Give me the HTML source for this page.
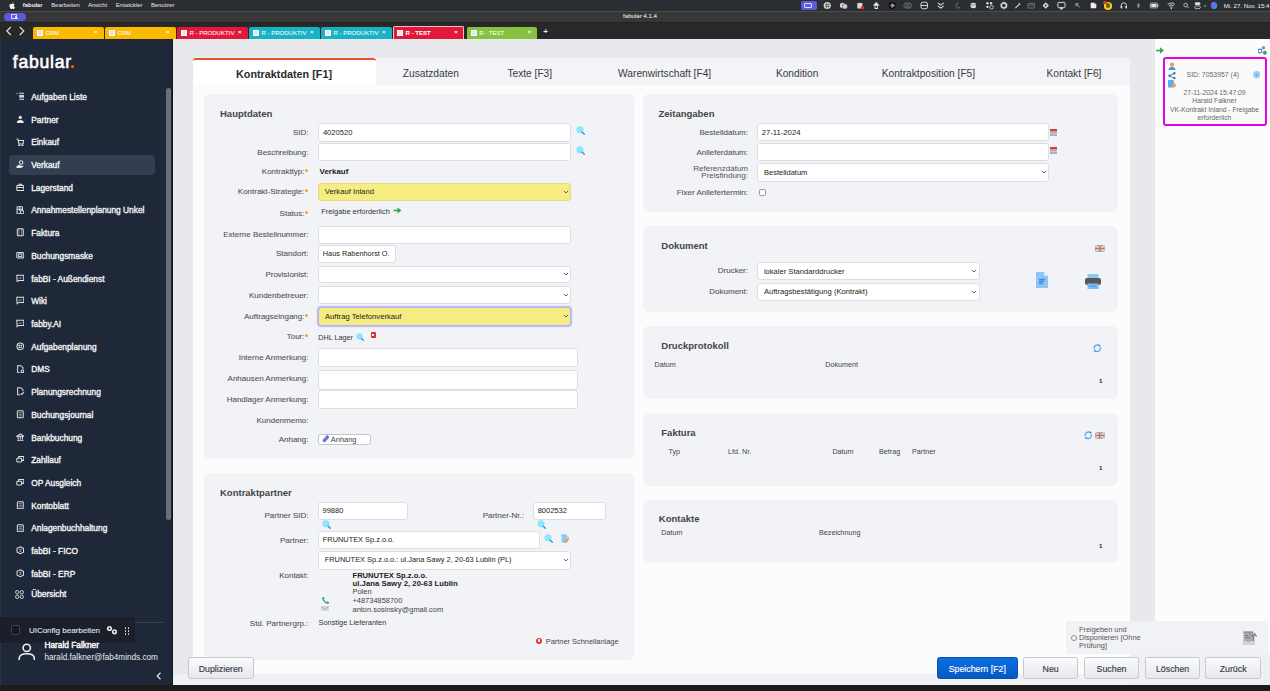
<!DOCTYPE html><html><head><meta charset='utf-8'><style>
*{margin:0;padding:0;box-sizing:border-box}
html,body{width:1270px;height:691px;overflow:hidden;background:#e8e9ed;font-family:"Liberation Sans",sans-serif}
.a{position:absolute}
.t{white-space:nowrap}
</style></head><body><div class="a" style="left:0px;top:0px;width:1270px;height:11px;background:#2a2d32"></div>
<div class="a t" style="left:22.8px;top:1.66px;font-size:5.9px;line-height:7.08px;color:#f2f2f2;font-weight:bold;">fabular</div>
<div class="a t" style="left:51.2px;top:1.66px;font-size:5.9px;line-height:7.08px;color:#e6e6e6;font-weight:normal;">Bearbeiten</div>
<div class="a t" style="left:87.9px;top:1.66px;font-size:5.9px;line-height:7.08px;color:#e6e6e6;font-weight:normal;">Ansicht</div>
<div class="a t" style="left:115.7px;top:1.66px;font-size:5.9px;line-height:7.08px;color:#e6e6e6;font-weight:normal;">Entwickler</div>
<div class="a t" style="left:150.9px;top:1.66px;font-size:5.9px;line-height:7.08px;color:#e6e6e6;font-weight:normal;">Benutzer</div>
<svg class="a" style="left:8.7px;top:2px" width="6" height="7" viewBox="0 0 14 16"><path d="M11.5 8.5c0-2 1.6-2.9 1.7-3-1-1.4-2.4-1.6-2.9-1.6-1.2-.1-2.4.7-3 .7-.6 0-1.6-.7-2.6-.7C3.300 4 1 5.200 1 8.600c0 2.100.8 4.300 1.800 5.700.8 1.200 1.600 2.200 2.600 2.200 1 0 1.400-.7 2.600-.7 1.200 0 1.500.7 2.600.7 1.100 0 1.800-1 2.500-2 .8-1.100 1.100-2.200 1.100-2.300 0 0-2.700-1-2.700-3.700zM9.500 2.600C10 2 10.400 1.100 10.300.2 9.500.2 8.600.7 8 1.300c-.5.600-1 1.500-.8 2.300.9.100 1.700-.4 2.300-1z" fill="#f0f0f0"/></svg>
<div class="a" style="left:800.7px;top:1px;width:16.6px;height:9px;background:#5b5bd6;border-radius:2px"></div>
<div class="a" style="left:804px;top:2.6px;width:8px;height:5.5px;border:1px solid #dfe0ff;border-radius:1px"></div>
<svg class="a" style="left:823px;top:1px" width="8.5" height="9" viewBox="0 0 10 10" fill="none" stroke="#e0e0e0" stroke-width="1.1"><circle cx="5" cy="5" r="4.2" fill="#e0e0e0" stroke="none"/><path d="M2 4 H8 M2 6 H8 M4 1.5 V8.5 M6 1.5 V8.5" stroke="#2a2d32" stroke-width="0.6"/></svg>
<svg class="a" style="left:839.4px;top:1px" width="9" height="9" viewBox="0 0 10 10" fill="none" stroke="#e0e0e0" stroke-width="1.1"><circle cx="4" cy="5" r="3" fill="#d8d8d8" stroke="none"/><circle cx="6.5" cy="6" r="3" fill="#cfcfcf" stroke="#2a2d32" stroke-width="0.6"/></svg>
<svg class="a" style="left:855.5px;top:1px" width="8.5" height="9" viewBox="0 0 10 10" fill="none" stroke="#e0e0e0" stroke-width="1.1"><path d="M1.5 2 H7.5 V8.5 H1.5Z" fill="#d8d8d8" stroke="none"/><circle cx="7.5" cy="7.5" r="2" fill="#e53030" stroke="none"/></svg>
<svg class="a" style="left:871.6px;top:1px" width="8.5" height="9" viewBox="0 0 10 10" fill="none" stroke="#e0e0e0" stroke-width="1.1"><path d="M5 1 L9 5 H7 V9 H3 V5 H1Z" fill="#e8e8e8" stroke="none"/><circle cx="5" cy="6.5" r="1.3" fill="#2a2d32" stroke="none"/></svg>
<svg class="a" style="left:887.6px;top:1px" width="8.5" height="9" viewBox="0 0 10 10" fill="none" stroke="#e0e0e0" stroke-width="1.1"><circle cx="5" cy="5" r="4.3" fill="#111" stroke="none"/><path d="M2.5 5 H3.3 M4 3 V7 M5.3 2.5 V7.5 M6.6 3.5 V6.5 M7.6 4.5 V5.5" stroke="#ddd" stroke-width="0.8"/></svg>
<svg class="a" style="left:902.8px;top:1px" width="9.4" height="9" viewBox="0 0 10 10" fill="none" stroke="#e0e0e0" stroke-width="1.1"><ellipse cx="5" cy="5" rx="4.3" ry="3" stroke="#777"/><circle cx="5" cy="5" r="1.4" stroke="#777"/></svg>
<svg class="a" style="left:919.8px;top:1px" width="8.5" height="9" viewBox="0 0 10 10" fill="none" stroke="#e0e0e0" stroke-width="1.1"><rect x="1.2" y="1.2" width="7.6" height="7.6" rx="2"/><path d="M1.2 5 H8.8"/></svg>
<svg class="a" style="left:936.8px;top:1px" width="7.5" height="9" viewBox="0 0 10 10" fill="none" stroke="#e0e0e0" stroke-width="1.1"><path d="M1 1.5 L5 4.5 L9 1.5 M1 5.5 L5 8.5 L9 5.5" stroke-width="1.4"/></svg>
<svg class="a" style="left:953.8px;top:1px" width="6.6" height="9" viewBox="0 0 10 10" fill="none" stroke="#e0e0e0" stroke-width="1.1"><path d="M6.5 1 A4 4 0 1 0 9 8 A3.3 3.3 0 0 1 6.5 1Z" stroke="#666"/></svg>
<svg class="a" style="left:969.9px;top:1px" width="6.6" height="9" viewBox="0 0 10 10" fill="none" stroke="#e0e0e0" stroke-width="1.1"><path d="M1 2 V8 Q5 10 9 8 V2 Q5 0 1 2Z" fill="#d8d8d8" stroke="none"/><path d="M1 3.5 Q5 5.5 9 3.5" stroke="#2a2d32" stroke-width="0.7"/></svg>
<svg class="a" style="left:985px;top:1px" width="9.4" height="9" viewBox="0 0 10 10" fill="none" stroke="#e0e0e0" stroke-width="1.1"><circle cx="2.5" cy="2.5" r="1.3" fill="#ddd" stroke="none"/><circle cx="6.5" cy="2.5" r="1.3" fill="#ddd" stroke="none"/><circle cx="2.5" cy="6.5" r="1.3" fill="#ddd" stroke="none"/><circle cx="7" cy="7" r="2" stroke-width="0.9"/></svg>
<svg class="a" style="left:1000px;top:1px" width="7.7" height="9" viewBox="0 0 10 10" fill="none" stroke="#e0e0e0" stroke-width="1.1"><circle cx="5" cy="5" r="3.2" stroke-width="1.8"/><circle cx="5" cy="5" r="4.5" stroke-width="0.8" stroke-dasharray="1.2 1.2"/></svg>
<svg class="a" style="left:1014.3px;top:1px" width="6.7" height="9" viewBox="0 0 10 10" fill="none" stroke="#e0e0e0" stroke-width="1.1"><path d="M1.5 8.5 L8 2 L9 3 L2.5 9.5Z" fill="#ddd" stroke="none"/><path d="M7 1 L9.5 3.5" stroke-width="1.4"/></svg>
<svg class="a" style="left:1026.6px;top:1px" width="8.4" height="9" viewBox="0 0 10 10" fill="none" stroke="#e0e0e0" stroke-width="1.1"><rect x="1" y="2.5" width="8" height="5.5" rx="1" stroke="#777"/><path d="M1 4.5 H9" stroke="#777"/></svg>
<svg class="a" style="left:1042.3px;top:1px" width="7.5" height="9" viewBox="0 0 10 10" fill="none" stroke="#e0e0e0" stroke-width="1.1"><path d="M5 0.8 L9.2 5 L5 9.2 L0.8 5Z" fill="#ddd" stroke="none"/><circle cx="5" cy="5" r="1.2" fill="#2a2d32" stroke="none"/></svg>
<svg class="a" style="left:1057.4px;top:1px" width="8.9" height="9" viewBox="0 0 10 10" fill="none" stroke="#e0e0e0" stroke-width="1.1"><rect x="1" y="1.5" width="8" height="6" rx="1"/><path d="M4 9 L5 7 L6 9Z" fill="#ddd"/></svg>
<svg class="a" style="left:1075.4px;top:1px" width="5.6" height="9" viewBox="0 0 10 10" fill="none" stroke="#e0e0e0" stroke-width="1.1"><path d="M8.5 8.5 L2 2 M2 6.5 V2 H6.5" stroke-width="1.3"/></svg>
<svg class="a" style="left:1090px;top:1px" width="7" height="9" viewBox="0 0 10 10" fill="none" stroke="#e0e0e0" stroke-width="1.1"><path d="M1 1 H6.5 L9 3.5 V9 H1Z" fill="#eee" stroke="none"/><path d="M6.5 1 V3.5 H9" stroke="#999" stroke-width="0.6"/></svg>
<div class="a" style="left:1103.7px;top:1.5px;width:8.5px;height:8px;background:#f2d21b;border-radius:50%"></div>
<div class="a" style="left:1105.6px;top:3.4px;width:4.6px;height:4.2px;background:#6b5a10;border-radius:50%"></div>
<div class="a" style="left:1103px;top:0.8px;width:3.6px;height:3.6px;background:#e5332a;border-radius:50%"></div>
<svg class="a" style="left:1119.8px;top:1px" width="7.6" height="9" viewBox="0 0 10 10" fill="none" stroke="#e0e0e0" stroke-width="1.1"><path d="M1.5 8 V5 A3.5 3.5 0 0 1 8.5 5 V8" stroke-width="1.2"/><rect x="1" y="5.5" width="2" height="3.5" rx="0.6" fill="#e0e0e0" stroke="none"/><rect x="7" y="5.5" width="2" height="3.5" rx="0.6" fill="#e0e0e0" stroke="none"/></svg>
<svg class="a" style="left:1135.9px;top:1px" width="4.7" height="9" viewBox="0 0 10 10" fill="none" stroke="#e0e0e0" stroke-width="1.1"><path d="M2.5 3 L7.5 7 L5 9 V1 L7.5 3 L2.5 7" stroke-width="1.1"/></svg>
<svg class="a" style="left:1149px;top:1px" width="10.5" height="9" viewBox="0 0 10 10" fill="none" stroke="#e0e0e0" stroke-width="1.1"><rect x="0.6" y="2.3" width="8" height="5.4" rx="1.2" stroke-width="0.8"/><rect x="1.6" y="3.3" width="6" height="3.4" fill="#e0e0e0" stroke="none"/><path d="M9.3 4 V6" stroke-width="0.8"/></svg>
<svg class="a" style="left:1167px;top:1px" width="8.6" height="9" viewBox="0 0 10 10" fill="none" stroke="#e0e0e0" stroke-width="1.1"><path d="M0.8 3.8 A6 6 0 0 1 9.2 3.8 M2.3 5.5 A4 4 0 0 1 7.7 5.5 M3.8 7.1 A2 2 0 0 1 6.2 7.1" stroke-width="1.1"/><circle cx="5" cy="8.5" r="0.8" fill="#e0e0e0" stroke="none"/></svg>
<svg class="a" style="left:1182.7px;top:1px" width="6.1" height="9" viewBox="0 0 10 10" fill="none" stroke="#e0e0e0" stroke-width="1.1"><circle cx="4.3" cy="4.3" r="3" stroke-width="1.2"/><path d="M6.5 6.5 L9.2 9.2" stroke-width="1.3"/></svg>
<svg class="a" style="left:1194px;top:1px" width="8" height="9" viewBox="0 0 10 10" fill="none" stroke="#e0e0e0" stroke-width="1.1"><rect x="1" y="1" width="7" height="3.5" rx="1.75" fill="#e0e0e0" stroke="none"/><rect x="1" y="5.5" width="7" height="3.5" rx="1.75" stroke-width="0.9"/></svg>
<div class="a" style="left:1210.5px;top:1.5px;width:6.5px;height:7px;background:linear-gradient(135deg,#d94fd0,#3a7bf0,#2bc6c4);border-radius:50%"></div>
<div class="a" style="left:1203.5px;top:4.5px;width:2px;height:2px;background:#2ecc40;border-radius:50%"></div>
<div class="a t" style="left:1223.8px;top:1.54px;font-size:6.1px;line-height:7.32px;color:#f0f0f0;font-weight:normal;">Mi. 27. Nov. 15:4</div>
<div class="a" style="left:0px;top:10.5px;width:1270px;height:11.5px;background:#373737;border-top:1px solid #4d4d4d"></div>
<div class="a" style="left:3.5px;top:12.5px;width:22px;height:8.5px;background:#5a5ae0;border-radius:5px"></div>
<div class="a" style="left:10.8px;top:14px;width:6px;height:5px;border:0.9px solid #d8d8ff;border-radius:0.5px"></div>
<div class="a" style="left:14.5px;top:17.6px;width:3.6px;height:1.9px;background:#f0f0ff;border-radius:1.5px 1.5px 0 0"></div>
<div class="a" style="left:15.4px;top:15.8px;width:1.8px;height:1.8px;background:#f0f0ff;border-radius:50%"></div>
<div class="a t" style="left:340px;width:600px;text-align:center;top:12.34px;font-size:6.1px;line-height:7.32px;color:#d8d8d8;font-weight:normal;-webkit-text-stroke:0.15px #d8d8d8">fabular 4.1.4</div>
<div class="a" style="left:0px;top:22px;width:1270px;height:16.6px;background:#282828;border-top:0.6px solid #222"></div>
<svg class="a" style="left:5px;top:26px" width="22" height="10" viewBox="0 0 22 10"><path d="M5.8 1 L1.8 5 L5.8 9" stroke="#e8e8e8" stroke-width="1.1" fill="none"/><path d="M18.6 1 L22.6 5 L18.6 9" stroke="#e8e8e8" stroke-width="1.1" fill="none" transform="translate(-3.8,0)"/></svg>
<div class="a" style="left:33px;top:27px;width:70.6px;height:12px;background:#fbb900;border-radius:2px 2px 0 0"></div>
<div class="a" style="left:37px;top:29.8px;width:6px;height:6.3px;background:#e3e7f0;border:0.6px solid #fafafa"></div>
<div class="a t" style="left:45.4px;top:29.57px;font-size:6.05px;line-height:7.26px;color:#fff;font-weight:normal;-webkit-text-stroke:0.05px #fff">CRM</div>
<div class="a t" style="left:94px;top:29.40px;font-size:6px;line-height:7.20px;color:#fff;font-weight:bold;">×</div>
<div class="a" style="left:105px;top:27px;width:70.6px;height:12px;background:#fbb900;border-radius:2px 2px 0 0"></div>
<div class="a" style="left:109px;top:29.8px;width:6px;height:6.3px;background:#e3e7f0;border:0.6px solid #fafafa"></div>
<div class="a t" style="left:117.4px;top:29.57px;font-size:6.05px;line-height:7.26px;color:#fff;font-weight:normal;-webkit-text-stroke:0.05px #fff">CRM</div>
<div class="a t" style="left:166px;top:29.40px;font-size:6px;line-height:7.20px;color:#fff;font-weight:bold;">×</div>
<div class="a" style="left:177px;top:27px;width:70.6px;height:12px;background:#e2173a;border-radius:2px 2px 0 0"></div>
<div class="a" style="left:181px;top:29.8px;width:6px;height:6.3px;background:#e3e7f0;border:0.6px solid #fafafa"></div>
<div class="a t" style="left:189.4px;top:29.57px;font-size:6.05px;line-height:7.26px;color:#fff;font-weight:normal;-webkit-text-stroke:0.05px #fff">R - PRODUKTIV</div>
<div class="a t" style="left:238px;top:29.40px;font-size:6px;line-height:7.20px;color:#fff;font-weight:bold;">×</div>
<div class="a" style="left:249px;top:27px;width:70.6px;height:12px;background:#17b2c4;border-radius:2px 2px 0 0"></div>
<div class="a" style="left:253px;top:29.8px;width:6px;height:6.3px;background:#e3e7f0;border:0.6px solid #fafafa"></div>
<div class="a t" style="left:261.4px;top:29.57px;font-size:6.05px;line-height:7.26px;color:#fff;font-weight:normal;-webkit-text-stroke:0.05px #fff">R - PRODUKTIV</div>
<div class="a t" style="left:310px;top:29.40px;font-size:6px;line-height:7.20px;color:#fff;font-weight:bold;">×</div>
<div class="a" style="left:321px;top:27px;width:70.6px;height:12px;background:#17b2c4;border-radius:2px 2px 0 0"></div>
<div class="a" style="left:325px;top:29.8px;width:6px;height:6.3px;background:#e3e7f0;border:0.6px solid #fafafa"></div>
<div class="a t" style="left:333.4px;top:29.57px;font-size:6.05px;line-height:7.26px;color:#fff;font-weight:normal;-webkit-text-stroke:0.05px #fff">R - PRODUKTIV</div>
<div class="a t" style="left:382px;top:29.40px;font-size:6px;line-height:7.20px;color:#fff;font-weight:bold;">×</div>
<div class="a" style="left:393.2px;top:25.5px;width:70.6px;height:13.5px;background:#e2173a;border:1px solid #f3c0c8;border-bottom:none;border-radius:2px 2px 0 0"></div>
<div class="a" style="left:397.2px;top:29.8px;width:6px;height:6.3px;background:#e3e7f0;border:0.6px solid #fafafa"></div>
<div class="a t" style="left:405.59999999999997px;top:29.57px;font-size:6.05px;line-height:7.26px;color:#fff;font-weight:bold;-webkit-text-stroke:0.05px #fff">R - TEST</div>
<div class="a t" style="left:454.2px;top:29.40px;font-size:6px;line-height:7.20px;color:#fff;font-weight:bold;">×</div>
<div class="a" style="left:466.8px;top:27px;width:70.6px;height:12px;background:#86c240;border-radius:2px 2px 0 0"></div>
<div class="a" style="left:470.8px;top:29.8px;width:6px;height:6.3px;background:#e3e7f0;border:0.6px solid #fafafa"></div>
<div class="a t" style="left:479.2px;top:29.57px;font-size:6.05px;line-height:7.26px;color:#fff;font-weight:normal;-webkit-text-stroke:0.05px #fff">R - TEST</div>
<div class="a t" style="left:527.8px;top:29.40px;font-size:6px;line-height:7.20px;color:#fff;font-weight:bold;">×</div>
<div class="a t" style="left:543.3px;top:27.00px;font-size:8px;line-height:9.60px;color:#eee;font-weight:bold;">+</div>
<div class="a" style="left:0px;top:38.6px;width:172.5px;height:647px;background:#1f2838;border-right:1px solid #0f141c"></div>
<div class="a" style="left:0px;top:38.6px;width:1.2px;height:647px;background:#2c3442"></div>
<div class="a t" style="left:12.8px;top:52.24px;font-size:17.6px;line-height:21.12px;color:#ffffff;font-weight:normal;letter-spacing:0.75px;-webkit-text-stroke:0.6px #fff">fabular</div>
<div class="a" style="left:71.3px;top:65.3px;width:3px;height:3px;background:#f26b1d;border-radius:50%"></div>
<div class="a" style="left:8.9px;top:155.3px;width:146.5px;height:19.4px;background:#333e51;border-radius:4px"></div>
<div class="a t" style="left:31.2px;top:91.89px;font-size:8.35px;line-height:10.02px;color:#f2f4f7;font-weight:normal;-webkit-text-stroke:0.35px #f2f4f7">Aufgaben Liste</div>
<svg class="a" style="left:15.8px;top:92.10px" width="8.6" height="8.6" viewBox="0 0 16 16" fill="none" stroke="#dde1e7" stroke-width="1.9"><path d="M1 3 L2 4 L4 1.5" stroke-width="1.2"/><path d="M6 2.5 H15 M6 13.5 H15"/><rect x="6" y="5.5" width="9" height="5" fill="#cfd3da" stroke="none"/></svg>
<div class="a t" style="left:31.2px;top:114.60px;font-size:8.35px;line-height:10.02px;color:#f2f4f7;font-weight:normal;-webkit-text-stroke:0.35px #f2f4f7">Partner</div>
<svg class="a" style="left:15.8px;top:114.81px" width="8.6" height="8.6" viewBox="0 0 16 16" fill="none" stroke="#dde1e7" stroke-width="1.9"><circle cx="8" cy="4.5" r="3" fill="#e8ebef" stroke="none"/><path d="M1.5 15 Q1.5 9.5 8 9.5 Q14.5 9.5 14.5 15Z" fill="#e8ebef" stroke="none"/></svg>
<div class="a t" style="left:31.2px;top:137.31px;font-size:8.35px;line-height:10.02px;color:#f2f4f7;font-weight:normal;-webkit-text-stroke:0.35px #f2f4f7">Einkauf</div>
<svg class="a" style="left:15.8px;top:137.52px" width="8.6" height="8.6" viewBox="0 0 16 16" fill="none" stroke="#dde1e7" stroke-width="1.9"><path d="M1 2 H3.5 L5.5 11 H13 L14.5 4.5 H4.5"/><circle cx="6" cy="14" r="1.1"/><circle cx="12" cy="14" r="1.1"/></svg>
<div class="a t" style="left:31.2px;top:160.02px;font-size:8.35px;line-height:10.02px;color:#f2f4f7;font-weight:normal;-webkit-text-stroke:0.35px #f2f4f7">Verkauf</div>
<svg class="a" style="left:15.8px;top:160.23px" width="8.6" height="8.6" viewBox="0 0 16 16" fill="none" stroke="#dde1e7" stroke-width="1.9"><circle cx="9.5" cy="4.5" r="3.2"/><path d="M1 11 L5 9.5 Q7 9 9 10.5 H13 Q15 11 13.5 12.5 L9 15 H1Z" fill="#e8ebef" stroke="none"/></svg>
<div class="a t" style="left:31.2px;top:182.73px;font-size:8.35px;line-height:10.02px;color:#f2f4f7;font-weight:normal;-webkit-text-stroke:0.35px #f2f4f7">Lagerstand</div>
<svg class="a" style="left:15.8px;top:182.94px" width="8.6" height="8.6" viewBox="0 0 16 16" fill="none" stroke="#dde1e7" stroke-width="1.9"><rect x="1.5" y="4.5" width="13" height="9.5" rx="1.5"/><path d="M5.5 4.5 V2.5 H10.5 V4.5 M1.5 8.5 H14.5"/></svg>
<div class="a t" style="left:31.2px;top:205.44px;font-size:8.35px;line-height:10.02px;color:#f2f4f7;font-weight:normal;-webkit-text-stroke:0.35px #f2f4f7">Annahmestellenplanung Unkel</div>
<svg class="a" style="left:15.8px;top:205.65px" width="8.6" height="8.6" viewBox="0 0 16 16" fill="none" stroke="#dde1e7" stroke-width="1.9"><rect x="2" y="1.5" width="10" height="13" rx="1"/><path d="M2 6 H12 M7 1.5 V10"/><circle cx="11.5" cy="11.5" r="3.2" fill="#1f2838"/></svg>
<div class="a t" style="left:31.2px;top:228.15px;font-size:8.35px;line-height:10.02px;color:#f2f4f7;font-weight:normal;-webkit-text-stroke:0.35px #f2f4f7">Faktura</div>
<svg class="a" style="left:15.8px;top:228.36px" width="8.6" height="8.6" viewBox="0 0 16 16" fill="none" stroke="#dde1e7" stroke-width="1.9"><rect x="2.5" y="1.5" width="11" height="13" rx="1.5"/><path d="M5.5 1.5 V14.5 M10.5 1.5 V14.5" stroke-width="1"/></svg>
<div class="a t" style="left:31.2px;top:250.86px;font-size:8.35px;line-height:10.02px;color:#f2f4f7;font-weight:normal;-webkit-text-stroke:0.35px #f2f4f7">Buchungsmaske</div>
<svg class="a" style="left:15.8px;top:251.07px" width="8.6" height="8.6" viewBox="0 0 16 16" fill="none" stroke="#dde1e7" stroke-width="1.9"><rect x="1.5" y="3" width="13" height="10" rx="1.5"/><rect x="5" y="5.5" width="6" height="5"/></svg>
<div class="a t" style="left:31.2px;top:273.57px;font-size:8.35px;line-height:10.02px;color:#f2f4f7;font-weight:normal;-webkit-text-stroke:0.35px #f2f4f7">fabBI - Außendienst</div>
<svg class="a" style="left:15.8px;top:273.78px" width="8.6" height="8.6" viewBox="0 0 16 16" fill="none" stroke="#dde1e7" stroke-width="1.9"><path d="M1.5 2.5 H14.5 V12 H5 L2 14.5 Z"/><path d="M4.5 9.5 L7 7 L9 8.5 L11.5 6" stroke-width="1.2"/></svg>
<div class="a t" style="left:31.2px;top:296.28px;font-size:8.35px;line-height:10.02px;color:#f2f4f7;font-weight:normal;-webkit-text-stroke:0.35px #f2f4f7">Wiki</div>
<svg class="a" style="left:15.8px;top:296.49px" width="8.6" height="8.6" viewBox="0 0 16 16" fill="none" stroke="#dde1e7" stroke-width="1.9"><path d="M1.5 2.5 H14.5 V12 H5 L2 14.5 Z"/><path d="M4.5 9.5 L7 7 L9 8.5 L11.5 6" stroke-width="1.2"/></svg>
<div class="a t" style="left:31.2px;top:318.99px;font-size:8.35px;line-height:10.02px;color:#f2f4f7;font-weight:normal;-webkit-text-stroke:0.35px #f2f4f7">fabby.AI</div>
<svg class="a" style="left:15.8px;top:319.20px" width="8.6" height="8.6" viewBox="0 0 16 16" fill="none" stroke="#dde1e7" stroke-width="1.9"><path d="M1.5 2.5 H14.5 V12 H5 L2 14.5 Z"/><path d="M4.5 9.5 L7 7 L9 8.5 L11.5 6" stroke-width="1.2"/></svg>
<div class="a t" style="left:31.2px;top:341.70px;font-size:8.35px;line-height:10.02px;color:#f2f4f7;font-weight:normal;-webkit-text-stroke:0.35px #f2f4f7">Aufgabenplanung</div>
<svg class="a" style="left:15.8px;top:341.91px" width="8.6" height="8.6" viewBox="0 0 16 16" fill="none" stroke="#dde1e7" stroke-width="1.9"><circle cx="8" cy="8" r="6.3"/><circle cx="5.8" cy="6.5" r="0.8" fill="#cfd3da"/><circle cx="10.2" cy="6.5" r="0.8" fill="#cfd3da"/><path d="M5 11 Q8 8.5 11 11"/></svg>
<div class="a t" style="left:31.2px;top:364.41px;font-size:8.35px;line-height:10.02px;color:#f2f4f7;font-weight:normal;-webkit-text-stroke:0.35px #f2f4f7">DMS</div>
<svg class="a" style="left:15.8px;top:364.62px" width="8.6" height="8.6" viewBox="0 0 16 16" fill="none" stroke="#dde1e7" stroke-width="1.9"><path d="M9.5 1.5 H3 V14.5 H8 M9.5 1.5 L13 5 V8"/><circle cx="12" cy="12" r="2.5"/></svg>
<div class="a t" style="left:31.2px;top:387.12px;font-size:8.35px;line-height:10.02px;color:#f2f4f7;font-weight:normal;-webkit-text-stroke:0.35px #f2f4f7">Planungsrechnung</div>
<svg class="a" style="left:15.8px;top:387.33px" width="8.6" height="8.6" viewBox="0 0 16 16" fill="none" stroke="#dde1e7" stroke-width="1.9"><path d="M9.5 1.5 H3 V14.5 H8 M9.5 1.5 L13 5 V8"/><path d="M9 12 L11 14 L14.5 9.5"/></svg>
<div class="a t" style="left:31.2px;top:409.83px;font-size:8.35px;line-height:10.02px;color:#f2f4f7;font-weight:normal;-webkit-text-stroke:0.35px #f2f4f7">Buchungsjournal</div>
<svg class="a" style="left:15.8px;top:410.04px" width="8.6" height="8.6" viewBox="0 0 16 16" fill="none" stroke="#dde1e7" stroke-width="1.9"><rect x="2.5" y="1.5" width="11" height="13" rx="1.5"/><path d="M5 5 H11 M5 8 H11 M5 11 H11" stroke-width="1.1"/></svg>
<div class="a t" style="left:31.2px;top:432.54px;font-size:8.35px;line-height:10.02px;color:#f2f4f7;font-weight:normal;-webkit-text-stroke:0.35px #f2f4f7">Bankbuchung</div>
<svg class="a" style="left:15.8px;top:432.75px" width="8.6" height="8.6" viewBox="0 0 16 16" fill="none" stroke="#dde1e7" stroke-width="1.9"><path d="M1.5 6 L8 1.5 L14.5 6 Z M2 14.5 H14 M4 7 V12.5 M8 7 V12.5 M12 7 V12.5"/></svg>
<div class="a t" style="left:31.2px;top:455.25px;font-size:8.35px;line-height:10.02px;color:#f2f4f7;font-weight:normal;-webkit-text-stroke:0.35px #f2f4f7">Zahllauf</div>
<svg class="a" style="left:15.8px;top:455.46px" width="8.6" height="8.6" viewBox="0 0 16 16" fill="none" stroke="#dde1e7" stroke-width="1.9"><rect x="1.5" y="6" width="9" height="7" rx="1.5"/><path d="M5 6 V3 H14.5 V10 H10.5"/></svg>
<div class="a t" style="left:31.2px;top:477.96px;font-size:8.35px;line-height:10.02px;color:#f2f4f7;font-weight:normal;-webkit-text-stroke:0.35px #f2f4f7">OP Ausgleich</div>
<svg class="a" style="left:15.8px;top:478.17px" width="8.6" height="8.6" viewBox="0 0 16 16" fill="none" stroke="#dde1e7" stroke-width="1.9"><rect x="1.5" y="6" width="9" height="7" rx="1.5"/><path d="M5 6 V3 H14.5 V10 H10.5"/></svg>
<div class="a t" style="left:31.2px;top:500.67px;font-size:8.35px;line-height:10.02px;color:#f2f4f7;font-weight:normal;-webkit-text-stroke:0.35px #f2f4f7">Kontoblatt</div>
<svg class="a" style="left:15.8px;top:500.88px" width="8.6" height="8.6" viewBox="0 0 16 16" fill="none" stroke="#dde1e7" stroke-width="1.9"><rect x="2.5" y="1.5" width="11" height="13" rx="1.5"/><path d="M5 5 H11 M5 8 H11 M5 11 H11" stroke-width="1.1"/></svg>
<div class="a t" style="left:31.2px;top:523.38px;font-size:8.35px;line-height:10.02px;color:#f2f4f7;font-weight:normal;-webkit-text-stroke:0.35px #f2f4f7">Anlagenbuchhaltung</div>
<svg class="a" style="left:15.8px;top:523.59px" width="8.6" height="8.6" viewBox="0 0 16 16" fill="none" stroke="#dde1e7" stroke-width="1.9"><rect x="2.5" y="1.5" width="11" height="13" rx="1.5"/><path d="M5 5 H11 M5 8 H11 M5 11 H11" stroke-width="1.1"/></svg>
<div class="a t" style="left:31.2px;top:546.09px;font-size:8.35px;line-height:10.02px;color:#f2f4f7;font-weight:normal;-webkit-text-stroke:0.35px #f2f4f7">fabBI - FICO</div>
<svg class="a" style="left:15.8px;top:546.30px" width="8.6" height="8.6" viewBox="0 0 16 16" fill="none" stroke="#dde1e7" stroke-width="1.9"><path d="M8 1.5 L14 4.5 V11.5 L8 14.5 L2 11.5 V4.5 Z"/><path d="M6 6 H10 L7 10 H10" stroke-width="1.2"/></svg>
<div class="a t" style="left:31.2px;top:568.80px;font-size:8.35px;line-height:10.02px;color:#f2f4f7;font-weight:normal;-webkit-text-stroke:0.35px #f2f4f7">fabBI - ERP</div>
<svg class="a" style="left:15.8px;top:569.01px" width="8.6" height="8.6" viewBox="0 0 16 16" fill="none" stroke="#dde1e7" stroke-width="1.9"><path d="M8 1.5 L14 4.5 V11.5 L8 14.5 L2 11.5 V4.5 Z"/><path d="M6 6 H10 L7 10 H10" stroke-width="1.2"/></svg>
<div class="a t" style="left:31.2px;top:589.39px;font-size:8.35px;line-height:10.02px;color:#f2f4f7;font-weight:normal;-webkit-text-stroke:0.35px #f2f4f7">Übersicht</div>
<svg class="a" style="left:15.4px;top:590px" width="9" height="9" viewBox="0 0 9 9" fill="none" stroke="#c9ced6" stroke-width="1"><circle cx="2.2" cy="2.2" r="1.7"/><circle cx="6.8" cy="2.2" r="1.7"/><circle cx="2.2" cy="6.8" r="1.7"/><circle cx="6.8" cy="6.8" r="1.7"/></svg>
<div class="a" style="left:166px;top:88px;width:5.2px;height:432px;background:#6b7078;border-radius:3px"></div>
<div class="a" style="left:9px;top:622px;width:155px;height:0.8px;background:#3a4354"></div>
<div class="a" style="left:0px;top:617px;width:135px;height:25.7px;background:#1a1f28;border-radius:0 3px 3px 0;opacity:.95"></div>
<div class="a" style="left:10.9px;top:625.3px;width:9.2px;height:9.3px;border:1px solid #3d4450;border-radius:1.5px;background:#151a22"></div>
<div class="a t" style="left:28.9px;top:625.70px;font-size:8.0px;line-height:9.60px;color:#dfe3ea;font-weight:normal;-webkit-text-stroke:0.12px #dfe3ea">UIConfig bearbeiten</div>
<svg class="a" style="left:105.5px;top:625px" width="12" height="10" viewBox="0 0 12 10"><circle cx="3.5" cy="3.5" r="2.6" fill="#e6e6e6"/><circle cx="3.5" cy="3.5" r="1" fill="#1a1f28"/><circle cx="8.5" cy="6.8" r="2.6" fill="#e6e6e6"/><circle cx="8.5" cy="6.8" r="1" fill="#1a1f28"/></svg>
<div class="a" style="left:124.6px;top:627px;width:1.6px;height:1.6px;background:#e6e6e6;border-radius:50%"></div>
<div class="a" style="left:124.6px;top:630px;width:1.6px;height:1.6px;background:#e6e6e6;border-radius:50%"></div>
<div class="a" style="left:124.6px;top:633px;width:1.6px;height:1.6px;background:#e6e6e6;border-radius:50%"></div>
<div class="a" style="left:127.6px;top:627px;width:1.6px;height:1.6px;background:#e6e6e6;border-radius:50%"></div>
<div class="a" style="left:127.6px;top:630px;width:1.6px;height:1.6px;background:#e6e6e6;border-radius:50%"></div>
<div class="a" style="left:127.6px;top:633px;width:1.6px;height:1.6px;background:#e6e6e6;border-radius:50%"></div>
<svg class="a" style="left:17.8px;top:643.2px" width="17.5" height="17.5" viewBox="0 0 18 18" fill="none" stroke="#f0f0f0" stroke-width="1.6"><circle cx="9" cy="5" r="3.8"/><path d="M1.2 17.5 v-1.5 c0-3 3-5 7.8-5 s7.8 2 7.8 5 v1.5"/></svg>
<div class="a t" style="left:44.5px;top:641.22px;font-size:8.3px;line-height:9.96px;color:#ffffff;font-weight:normal;-webkit-text-stroke:0.4px #fff">Harald Falkner</div>
<div class="a t" style="left:44.5px;top:652.58px;font-size:8.2px;line-height:9.84px;color:#e8eaee;font-weight:normal;">harald.falkner@fab4minds.com</div>
<svg class="a" style="left:156px;top:671.5px" width="6" height="8" viewBox="0 0 6 8"><path d="M4.5 0.8 L1.2 4 L4.5 7.2" stroke="#e8e8e8" stroke-width="1.2" fill="none"/></svg>
<div class="a" style="left:0px;top:685px;width:1270px;height:6px;background:#1c1c1c"></div>
<div class="a" style="left:193px;top:58.3px;width:936.6px;height:615.5px;background:#fcfcfd"></div>
<div class="a" style="left:376px;top:58.3px;width:753.6px;height:27.7px;background:#f3f4f7"></div>
<div class="a" style="left:193px;top:58.3px;width:183px;height:27.7px;background:#ffffff;border-top:2.2px solid #e0582a;border-radius:3px 3px 0 0"></div>
<div class="a t" style="left:236px;top:67.52px;font-size:10.8px;line-height:12.96px;color:#2b2b2b;font-weight:bold;">Kontraktdaten [F1]</div>
<div class="a t" style="left:402.8px;top:68.28px;font-size:10.2px;line-height:12.24px;color:#3a3a3a;font-weight:normal;">Zusatzdaten</div>
<div class="a t" style="left:507.4px;top:68.28px;font-size:10.2px;line-height:12.24px;color:#3a3a3a;font-weight:normal;">Texte [F3]</div>
<div class="a t" style="left:618.1px;top:68.28px;font-size:10.2px;line-height:12.24px;color:#3a3a3a;font-weight:normal;">Warenwirtschaft [F4]</div>
<div class="a t" style="left:775.9px;top:68.28px;font-size:10.2px;line-height:12.24px;color:#3a3a3a;font-weight:normal;">Kondition</div>
<div class="a t" style="left:881.7px;top:68.28px;font-size:10.2px;line-height:12.24px;color:#3a3a3a;font-weight:normal;">Kontraktposition [F5]</div>
<div class="a t" style="left:1046.5px;top:68.28px;font-size:10.2px;line-height:12.24px;color:#3a3a3a;font-weight:normal;">Kontakt [F6]</div>
<div class="a" style="left:1155px;top:38.6px;width:115px;height:646.4px;background:#fcfcfc"></div>
<div class="a" style="left:204.3px;top:94.3px;width:429.49999999999994px;height:364.7px;background:#f2f3f7;border-radius:6px"></div>
<div class="a t" style="left:220px;top:108.30px;font-size:9.5px;line-height:11.40px;color:#444;font-weight:bold;">Hauptdaten</div>
<div class="a t" style="right:961.5px;top:127.50px;font-size:8px;line-height:9.60px;color:#555;font-weight:normal;-webkit-text-stroke:0.1px #555">SID:</div>
<div class="a" style="left:318.2px;top:123.3px;width:252.90000000000003px;height:18.500000000000004px;background:#fff;border:1px solid #dcdee3;border-radius:3px;"></div>
<div class="a t" style="left:322.9px;top:128.19px;font-size:7.6px;line-height:9.12px;color:#222;font-weight:normal;">4020520</div>
<svg class="a" style="left:576px;top:126px" width="9" height="9" viewBox="0 0 10 10"><circle cx="4.4" cy="4.3" r="3.9" fill="#8ae6fc"/><path d="M6.9 6.9 L9.2 9.1" stroke="#2a90e0" stroke-width="1.5" stroke-linecap="round"/></svg>
<div class="a t" style="right:961.5px;top:147.70px;font-size:8px;line-height:9.60px;color:#555;font-weight:normal;-webkit-text-stroke:0.1px #555">Beschreibung:</div>
<div class="a" style="left:318.2px;top:143.3px;width:252.90000000000003px;height:17.99999999999999px;background:#fff;border:1px solid #dcdee3;border-radius:3px;"></div>
<svg class="a" style="left:576px;top:145.5px" width="9" height="9" viewBox="0 0 10 10"><circle cx="4.4" cy="4.3" r="3.9" fill="#8ae6fc"/><path d="M6.9 6.9 L9.2 9.1" stroke="#2a90e0" stroke-width="1.5" stroke-linecap="round"/></svg>
<div class="a t" style="right:965.5px;top:166.50px;font-size:8px;line-height:9.60px;color:#555;font-weight:normal;-webkit-text-stroke:0.1px #555">Kontrakttyp:</div>
<div class="a" style="left:305.3px;top:168.70000000000002px;width:3px;height:3px;background:#f7a035;border-radius:50%"></div>
<div class="a t" style="left:319.5px;top:166.50px;font-size:8px;line-height:9.60px;color:#222;font-weight:bold;">Verkauf</div>
<div class="a t" style="right:965.5px;top:186.70px;font-size:8px;line-height:9.60px;color:#555;font-weight:normal;-webkit-text-stroke:0.1px #555">Kontrakt-Strategie:</div>
<div class="a" style="left:305.3px;top:188.9px;width:3px;height:3px;background:#f7a035;border-radius:50%"></div>
<div class="a" style="left:318.2px;top:182.8px;width:252.90000000000003px;height:18.099999999999984px;background:#f5ec82;border:1px solid #e6dc79;border-radius:3px;"></div>
<div class="a t" style="left:324.8px;top:187.43px;font-size:7.7px;line-height:9.24px;color:#222;font-weight:normal;">Verkauf Inland</div>
<svg class="a" style="left:563.0px;top:189.64999999999998px" width="6" height="4" viewBox="0 0 6 4"><path d="M0.8 0.8 L3 3 L5.2 0.8" stroke="#555" stroke-width="0.9" fill="none"/></svg>
<div class="a t" style="right:965.5px;top:208.50px;font-size:8px;line-height:9.60px;color:#555;font-weight:normal;-webkit-text-stroke:0.1px #555">Status:</div>
<div class="a" style="left:305.3px;top:210.70000000000002px;width:3px;height:3px;background:#f7a035;border-radius:50%"></div>
<div class="a t" style="left:321.2px;top:208.13px;font-size:7.45px;line-height:8.94px;color:#333;font-weight:normal;">Freigabe erforderlich</div>
<svg class="a" style="left:392.5px;top:207px" width="9" height="7" viewBox="0 0 9 7"><path d="M0.5 3.5 H6" stroke="#3aa64a" stroke-width="1.6"/><path d="M4.5 0.5 L8.5 3.5 L4.5 6.5 Z" fill="#3aa64a"/></svg>
<div class="a t" style="right:961.5px;top:229.50px;font-size:8px;line-height:9.60px;color:#555;font-weight:normal;-webkit-text-stroke:0.1px #555">Externe Bestellnummer:</div>
<div class="a" style="left:318.2px;top:225.8px;width:252.90000000000003px;height:18.199999999999978px;background:#fff;border:1px solid #dcdee3;border-radius:3px;"></div>
<div class="a t" style="right:961.5px;top:249.20px;font-size:8px;line-height:9.60px;color:#555;font-weight:normal;-webkit-text-stroke:0.1px #555">Standort:</div>
<div class="a" style="left:318.2px;top:245.3px;width:77.60000000000001px;height:17.600000000000012px;background:#fff;border:1px solid #dcdee3;border-radius:3px;"></div>
<div class="a t" style="left:322.8px;top:249.90px;font-size:7.33px;line-height:8.80px;color:#222;font-weight:normal;">Haus Rabenhorst O.</div>
<div class="a t" style="right:961.5px;top:270.00px;font-size:8px;line-height:9.60px;color:#555;font-weight:normal;-webkit-text-stroke:0.1px #555">Provisionist:</div>
<div class="a" style="left:318.2px;top:265.8px;width:252.90000000000003px;height:17.49999999999999px;background:#fff;border:1px solid #dcdee3;border-radius:3px;"></div>
<svg class="a" style="left:563.0px;top:272.34999999999997px" width="6" height="4" viewBox="0 0 6 4"><path d="M0.8 0.8 L3 3 L5.2 0.8" stroke="#555" stroke-width="0.9" fill="none"/></svg>
<div class="a t" style="right:961.5px;top:290.50px;font-size:8px;line-height:9.60px;color:#555;font-weight:normal;-webkit-text-stroke:0.1px #555">Kundenbetreuer:</div>
<div class="a" style="left:318.2px;top:286.3px;width:252.90000000000003px;height:17.49999999999999px;background:#fff;border:1px solid #dcdee3;border-radius:3px;"></div>
<svg class="a" style="left:563.0px;top:292.84999999999997px" width="6" height="4" viewBox="0 0 6 4"><path d="M0.8 0.8 L3 3 L5.2 0.8" stroke="#555" stroke-width="0.9" fill="none"/></svg>
<div class="a t" style="right:965.5px;top:312.00px;font-size:8px;line-height:9.60px;color:#555;font-weight:normal;-webkit-text-stroke:0.1px #555">Auftragseingang:</div>
<div class="a" style="left:305.3px;top:314.2px;width:3px;height:3px;background:#f7a035;border-radius:50%"></div>
<div class="a" style="left:318.2px;top:307.1px;width:252.90000000000003px;height:18.8px;background:#f5ec82;border:1px solid #b4b0f2;border-radius:3px;box-shadow:0 0 0 1.2px #c4c0f8"></div>
<div class="a t" style="left:325.0px;top:312.10px;font-size:7.67px;line-height:9.20px;color:#222;font-weight:normal;">Auftrag Telefonverkauf</div>
<svg class="a" style="left:563.0px;top:314.3px" width="6" height="4" viewBox="0 0 6 4"><path d="M0.8 0.8 L3 3 L5.2 0.8" stroke="#555" stroke-width="0.9" fill="none"/></svg>
<div class="a t" style="right:965.5px;top:332.20px;font-size:8px;line-height:9.60px;color:#555;font-weight:normal;-webkit-text-stroke:0.1px #555">Tour:</div>
<div class="a" style="left:305.3px;top:334.4px;width:3px;height:3px;background:#f7a035;border-radius:50%"></div>
<div class="a t" style="left:318.3px;top:334.18px;font-size:7.2px;line-height:8.64px;color:#333;font-weight:normal;">DHL Lager</div>
<svg class="a" style="left:356px;top:332.8px" width="8" height="8" viewBox="0 0 10 10"><circle cx="4.4" cy="4.3" r="3.9" fill="#8ae6fc"/><path d="M6.9 6.9 L9.2 9.1" stroke="#2a90e0" stroke-width="1.5" stroke-linecap="round"/></svg>
<div class="a" style="left:370.5px;top:331.6px;width:5px;height:6.5px;background:#d9342b;border-radius:1px"></div>
<div class="a" style="left:371.8px;top:333.6px;width:2.4px;height:2.4px;background:#fff"></div>
<div class="a t" style="right:961.5px;top:352.70px;font-size:8px;line-height:9.60px;color:#555;font-weight:normal;-webkit-text-stroke:0.1px #555">Interne Anmerkung:</div>
<div class="a" style="left:318.2px;top:348.0px;width:260.3px;height:19.100000000000012px;background:#fff;border:1px solid #dcdee3;border-radius:3px;"></div>
<div class="a t" style="right:961.5px;top:373.70px;font-size:8px;line-height:9.60px;color:#555;font-weight:normal;-webkit-text-stroke:0.1px #555">Anhausen Anmerkung:</div>
<div class="a" style="left:318.2px;top:370.0px;width:260.3px;height:19.49999999999999px;background:#fff;border:1px solid #dcdee3;border-radius:3px;"></div>
<div class="a t" style="right:961.5px;top:395.00px;font-size:8px;line-height:9.60px;color:#555;font-weight:normal;-webkit-text-stroke:0.1px #555">Handlager Anmerkung:</div>
<div class="a" style="left:318.2px;top:389.9px;width:260.3px;height:19.400000000000023px;background:#fff;border:1px solid #dcdee3;border-radius:3px;"></div>
<div class="a t" style="right:961.5px;top:416.00px;font-size:8px;line-height:9.60px;color:#555;font-weight:normal;-webkit-text-stroke:0.1px #555">Kundenmemo:</div>
<div class="a t" style="right:961.5px;top:434.50px;font-size:8px;line-height:9.60px;color:#555;font-weight:normal;-webkit-text-stroke:0.1px #555">Anhang:</div>
<div class="a" style="left:318.3px;top:433.7px;width:52.5px;height:11.2px;background:#fff;border:1px solid #c4c5ca;border-radius:2.5px"></div>
<svg class="a" style="left:321.5px;top:435.3px" width="7.5" height="7.5" viewBox="0 0 8 8"><rect x="2.3" y="-0.2" width="3.6" height="8.4" rx="1.8" fill="#5f6fd8" transform="rotate(40 4 4)"/><path d="M4.6 1.8 L3 5.6" stroke="#aab4f0" stroke-width="0.5"/></svg>
<div class="a t" style="left:330.8px;top:435.73px;font-size:7.45px;line-height:8.94px;color:#3a3a3a;font-weight:normal;">Anhang</div>
<div class="a" style="left:203.5px;top:473px;width:430.29999999999995px;height:187px;background:#f2f3f7;border-radius:6px"></div>
<div class="a t" style="left:220px;top:486.60px;font-size:9.5px;line-height:11.40px;color:#444;font-weight:bold;">Kontraktpartner</div>
<div class="a t" style="right:961.5px;top:511.20px;font-size:8px;line-height:9.60px;color:#555;font-weight:normal;-webkit-text-stroke:0.1px #555">Partner SID:</div>
<div class="a" style="left:318.2px;top:501.5px;width:90.3px;height:18.199999999999978px;background:#fff;border:1px solid #dcdee3;border-radius:3px;"></div>
<div class="a t" style="left:322.5px;top:506.30px;font-size:7.5px;line-height:9.00px;color:#222;font-weight:normal;">99880</div>
<svg class="a" style="left:321.5px;top:519.5px" width="9" height="9" viewBox="0 0 10 10"><circle cx="4.4" cy="4.3" r="3.9" fill="#8ae6fc"/><path d="M6.9 6.9 L9.2 9.1" stroke="#2a90e0" stroke-width="1.5" stroke-linecap="round"/></svg>
<div class="a t" style="right:746px;top:511.20px;font-size:8px;line-height:9.60px;color:#555;font-weight:normal;-webkit-text-stroke:0.1px #555">Partner-Nr.:</div>
<div class="a" style="left:533.4000000000001px;top:501.5px;width:72.49999999999993px;height:18.199999999999978px;background:#fff;border:1px solid #dcdee3;border-radius:3px;"></div>
<div class="a t" style="left:537.7px;top:506.30px;font-size:7.5px;line-height:9.00px;color:#222;font-weight:normal;">8002532</div>
<svg class="a" style="left:537px;top:519.5px" width="9" height="9" viewBox="0 0 10 10"><circle cx="4.4" cy="4.3" r="3.9" fill="#8ae6fc"/><path d="M6.9 6.9 L9.2 9.1" stroke="#2a90e0" stroke-width="1.5" stroke-linecap="round"/></svg>
<div class="a t" style="right:961.5px;top:535.50px;font-size:8px;line-height:9.60px;color:#555;font-weight:normal;-webkit-text-stroke:0.1px #555">Partner:</div>
<div class="a" style="left:318.2px;top:531.4px;width:221.90000000000003px;height:17.400000000000023px;background:#fff;border:1px solid #dcdee3;border-radius:3px;"></div>
<div class="a t" style="left:322.8px;top:535.86px;font-size:7.4px;line-height:8.88px;color:#222;font-weight:normal;">FRUNUTEX Sp.z.o.o.</div>
<svg class="a" style="left:544px;top:533.8px" width="9" height="9" viewBox="0 0 10 10"><circle cx="4.4" cy="4.3" r="3.9" fill="#8ae6fc"/><path d="M6.9 6.9 L9.2 9.1" stroke="#2a90e0" stroke-width="1.5" stroke-linecap="round"/></svg>
<svg class="a" style="left:560.5px;top:533.5px" width="8.5" height="9.5" viewBox="0 0 8.5 9.5"><path d="M0.5 0.3 H4.8 L6.6 2.1 V8.6 H0.5Z" fill="#8ec4f6"/><path d="M3.4 8.9 L7.9 4.4" stroke="#f0a020" stroke-width="1.6"/><path d="M7.3 3.8 L8.3 2.8" stroke="#f4a0a0" stroke-width="1.2"/></svg>
<div class="a" style="left:318.2px;top:551.1px;width:253.09999999999997px;height:18.499999999999932px;background:#fff;border:1px solid #dcdee3;border-radius:3px;"></div>
<div class="a t" style="left:324.7px;top:556.10px;font-size:7.41px;line-height:8.89px;color:#222;font-weight:normal;">FRUNUTEX Sp.z.o.o.: ul.Jana Sawy 2, 20-63 Lublin (PL)</div>
<svg class="a" style="left:563.1999999999999px;top:558.1500000000001px" width="6" height="4" viewBox="0 0 6 4"><path d="M0.8 0.8 L3 3 L5.2 0.8" stroke="#555" stroke-width="0.9" fill="none"/></svg>
<div class="a t" style="right:961.5px;top:570.50px;font-size:8px;line-height:9.60px;color:#555;font-weight:normal;-webkit-text-stroke:0.1px #555">Kontakt:</div>
<div class="a t" style="left:352.5px;top:570.74px;font-size:7.6px;line-height:9.12px;color:#222;font-weight:bold;">FRUNUTEX Sp.z.o.o.</div>
<div class="a t" style="left:352.5px;top:578.82px;font-size:7.8px;line-height:9.36px;color:#222;font-weight:bold;">ul.Jana Sawy 2, 20-63 Lublin</div>
<div class="a t" style="left:352.5px;top:588.13px;font-size:7.45px;line-height:8.94px;color:#444;font-weight:normal;">Polen</div>
<div class="a t" style="left:352.5px;top:596.53px;font-size:7.45px;line-height:8.94px;color:#444;font-weight:normal;">+48734858700</div>
<div class="a t" style="left:352.5px;top:605.53px;font-size:7.45px;line-height:8.94px;color:#444;font-weight:normal;">anton.sosinsky@gmail.com</div>
<svg class="a" style="left:321.5px;top:596.5px" width="7" height="7" viewBox="0 0 7 7"><path d="M1.5 0.6 Q0.6 3.2 2.8 4.6 Q4.6 6.4 6.6 5.8" stroke="#1b9a84" stroke-width="1.2" fill="none"/><circle cx="1.3" cy="1.3" r="1.1" fill="#1b9a84"/><circle cx="5.8" cy="5.6" r="1.1" fill="#1b9a84"/></svg>
<svg class="a" style="left:321px;top:605.8px" width="8" height="5.5" viewBox="0 0 8 5.5"><rect width="8" height="5.5" fill="#d3d9e2"/><path d="M0.4 0.6 L4 3.4 L7.6 0.6" stroke="#9aa6b6" stroke-width="0.9" fill="none"/></svg>
<div class="a t" style="right:961.5px;top:619.20px;font-size:8px;line-height:9.60px;color:#555;font-weight:normal;-webkit-text-stroke:0.1px #555">Std. Partnergrp.:</div>
<div class="a t" style="left:318.5px;top:619.06px;font-size:7.4px;line-height:8.88px;color:#333;font-weight:normal;">Sonstige Lieferanten</div>
<div class="a" style="left:536px;top:637.5px;width:6px;height:6px;background:#e23b2e;border-radius:50%"></div>
<div class="a" style="left:537.8px;top:639.3px;width:2.4px;height:2.4px;background:#fff;border-radius:50%"></div>
<div class="a t" style="left:545.8px;top:637.56px;font-size:7.4px;line-height:8.88px;color:#444;font-weight:normal;">Partner Schnellanlage</div>
<div class="a" style="left:642.5px;top:94.2px;width:475.79999999999995px;height:118.10000000000001px;background:#f2f3f7;border-radius:6px"></div>
<div class="a t" style="left:658.5px;top:108.30px;font-size:9.5px;line-height:11.40px;color:#444;font-weight:bold;">Zeitangaben</div>
<div class="a t" style="right:522px;top:128.00px;font-size:8px;line-height:9.60px;color:#555;font-weight:normal;-webkit-text-stroke:0.1px #555">Bestelldatum:</div>
<div class="a" style="left:757.0px;top:123.3px;width:291.7000000000001px;height:18.000000000000004px;background:#fff;border:1px solid #dcdee3;border-radius:3px;"></div>
<div class="a t" style="left:761.6999999999999px;top:127.88px;font-size:7.7px;line-height:9.24px;color:#222;font-weight:normal;">27-11-2024</div>
<div class="a" style="left:1050px;top:129.79999999999998px;width:7.4px;height:5.8px;background:#a9b3bd"></div>
<div class="a" style="left:1050px;top:128.6px;width:7.4px;height:2px;background:#ee3030"></div>
<div class="a" style="left:1050.8px;top:132.79999999999998px;width:5.8px;height:0.6px;background:#c3ccd4"></div>
<div class="a t" style="right:522px;top:147.50px;font-size:8px;line-height:9.60px;color:#555;font-weight:normal;-webkit-text-stroke:0.1px #555">Anlieferdatum:</div>
<div class="a" style="left:757.0px;top:142.9px;width:291.7000000000001px;height:17.700000000000006px;background:#fff;border:1px solid #dcdee3;border-radius:3px;"></div>
<div class="a" style="left:1050px;top:148.2px;width:7.4px;height:5.8px;background:#a9b3bd"></div>
<div class="a" style="left:1050px;top:147px;width:7.4px;height:2px;background:#ee3030"></div>
<div class="a" style="left:1050.8px;top:151.2px;width:5.8px;height:0.6px;background:#c3ccd4"></div>
<div class="a t" style="right:522px;top:163.50px;font-size:8px;line-height:9.60px;color:#555;font-weight:normal;">Referenzdatum</div>
<div class="a t" style="right:522px;top:171.00px;font-size:8px;line-height:9.60px;color:#555;font-weight:normal;">Preisfindung:</div>
<div class="a" style="left:757.0px;top:163.0px;width:291.7000000000001px;height:18.49999999999999px;background:#fff;border:1px solid #dcdee3;border-radius:3px;"></div>
<div class="a t" style="left:764.0px;top:167.95px;font-size:7.5px;line-height:9.00px;color:#222;font-weight:normal;">Bestelldatum</div>
<svg class="a" style="left:1040.6000000000001px;top:170.04999999999998px" width="6" height="4" viewBox="0 0 6 4"><path d="M0.8 0.8 L3 3 L5.2 0.8" stroke="#555" stroke-width="0.9" fill="none"/></svg>
<div class="a t" style="right:522px;top:187.50px;font-size:8px;line-height:9.60px;color:#555;font-weight:normal;-webkit-text-stroke:0.1px #555">Fixer Anliefertermin:</div>
<div class="a" style="left:759.2px;top:188.8px;width:7px;height:7px;background:#fff;border:1px solid #9a9a9a;border-radius:1.8px"></div>
<div class="a" style="left:642.5px;top:226.3px;width:475.79999999999995px;height:85.5px;background:#f2f3f7;border-radius:6px"></div>
<div class="a t" style="left:661.3px;top:240.30px;font-size:9.5px;line-height:11.40px;color:#444;font-weight:bold;">Dokument</div>
<svg class="a" style="left:1095px;top:244.6px" width="9.5" height="7" viewBox="0 0 20 14"><rect width="20" height="14" fill="#3f8ee6" rx="2"/><path d="M0 0 L20 14 M20 0 L0 14" stroke="#dfe9f6" stroke-width="2.6"/><path d="M10 0 V14 M0 7 H20" stroke="#e9eef5" stroke-width="5"/><path d="M10 0 V14 M0 7 H20" stroke="#f2662e" stroke-width="3.2"/></svg>
<div class="a t" style="right:522px;top:265.70px;font-size:8px;line-height:9.60px;color:#555;font-weight:normal;-webkit-text-stroke:0.1px #555">Drucker:</div>
<div class="a" style="left:757.0px;top:262.1px;width:222.50000000000006px;height:17.599999999999955px;background:#fff;border:1px solid #dcdee3;border-radius:3px;"></div>
<div class="a t" style="left:763.9px;top:266.54px;font-size:7.6px;line-height:9.12px;color:#222;font-weight:normal;">lokaler Standarddrucker</div>
<svg class="a" style="left:971.4px;top:268.7px" width="6" height="4" viewBox="0 0 6 4"><path d="M0.8 0.8 L3 3 L5.2 0.8" stroke="#555" stroke-width="0.9" fill="none"/></svg>
<div class="a t" style="right:522px;top:286.60px;font-size:8px;line-height:9.60px;color:#555;font-weight:normal;-webkit-text-stroke:0.1px #555">Dokument:</div>
<div class="a" style="left:757.0px;top:282.9px;width:222.50000000000006px;height:17.700000000000035px;background:#fff;border:1px solid #dcdee3;border-radius:3px;"></div>
<div class="a t" style="left:763.9px;top:287.36px;font-size:7.65px;line-height:9.18px;color:#222;font-weight:normal;">Auftragsbestätigung (Kontrakt)</div>
<svg class="a" style="left:971.4px;top:289.55px" width="6" height="4" viewBox="0 0 6 4"><path d="M0.8 0.8 L3 3 L5.2 0.8" stroke="#555" stroke-width="0.9" fill="none"/></svg>
<svg class="a" style="left:1035.7px;top:272px" width="12" height="16" viewBox="0 0 12 16"><path d="M0 0 H8 L12 4 V16 H0Z" fill="#8cc6f7"/><path d="M8 0 L12 4 H8Z" fill="#d5ebfd"/><path d="M3 7.5 H9 M3 9.5 H8 M3 11.5 H6.5" stroke="#3f88da" stroke-width="1.4"/></svg>
<svg class="a" style="left:1084.5px;top:273.5px" width="16" height="15" viewBox="0 0 16 15"><rect x="2.5" y="0" width="11" height="5" fill="#8ac8f8"/><rect x="0" y="4" width="16" height="7" rx="2" fill="#56575a"/><rect x="2.5" y="9.5" width="11" height="5.5" fill="#78baf2"/><path d="M4.5 12 H11" stroke="#4a90e0" stroke-width="0.8"/></svg>
<div class="a" style="left:642.5px;top:326.4px;width:475.79999999999995px;height:72.20000000000005px;background:#f2f3f7;border-radius:6px"></div>
<div class="a t" style="left:661.3px;top:339.80px;font-size:9.5px;line-height:11.40px;color:#444;font-weight:bold;">Druckprotokoll</div>
<svg class="a" style="left:1092.5px;top:343.8px" width="8.5" height="8.5" viewBox="0 0 10 10"><path d="M7.6 2.2 A3.7 3.7 0 0 0 1.6 6.2" stroke="#4a9ee8" stroke-width="1.3" fill="none"/><path d="M2.4 7.8 A3.7 3.7 0 0 0 8.4 3.8" stroke="#4a9ee8" stroke-width="1.3" fill="none"/><path d="M6.6 0.6 L9.2 1.4 L7.4 3.6Z" fill="#2f88e0"/><path d="M3.4 9.4 L0.8 8.6 L2.6 6.4Z" fill="#2f88e0"/></svg>
<div class="a t" style="left:654.5px;top:361.48px;font-size:7.2px;line-height:8.64px;color:#444;font-weight:normal;">Datum</div>
<div class="a t" style="left:825.3px;top:361.48px;font-size:7.2px;line-height:8.64px;color:#444;font-weight:normal;">Dokument</div>
<div class="a t" style="left:800.8px;width:600px;text-align:center;top:376.88px;font-size:6.2px;line-height:7.44px;color:#222;font-weight:bold;">1</div>
<div class="a" style="left:642.5px;top:412.5px;width:475.79999999999995px;height:73.0px;background:#f2f3f7;border-radius:6px"></div>
<div class="a t" style="left:661.3px;top:426.80px;font-size:9.5px;line-height:11.40px;color:#444;font-weight:bold;">Faktura</div>
<svg class="a" style="left:1083.5px;top:431px" width="8.5" height="8.5" viewBox="0 0 10 10"><path d="M7.6 2.2 A3.7 3.7 0 0 0 1.6 6.2" stroke="#4a9ee8" stroke-width="1.3" fill="none"/><path d="M2.4 7.8 A3.7 3.7 0 0 0 8.4 3.8" stroke="#4a9ee8" stroke-width="1.3" fill="none"/><path d="M6.6 0.6 L9.2 1.4 L7.4 3.6Z" fill="#2f88e0"/><path d="M3.4 9.4 L0.8 8.6 L2.6 6.4Z" fill="#2f88e0"/></svg>
<svg class="a" style="left:1095px;top:432px" width="9.5" height="7" viewBox="0 0 20 14"><rect width="20" height="14" fill="#3f8ee6" rx="2"/><path d="M0 0 L20 14 M20 0 L0 14" stroke="#dfe9f6" stroke-width="2.6"/><path d="M10 0 V14 M0 7 H20" stroke="#e9eef5" stroke-width="5"/><path d="M10 0 V14 M0 7 H20" stroke="#f2662e" stroke-width="3.2"/></svg>
<div class="a t" style="left:668.4px;top:448.38px;font-size:7.2px;line-height:8.64px;color:#444;font-weight:normal;">Typ</div>
<div class="a t" style="left:728px;top:448.38px;font-size:7.2px;line-height:8.64px;color:#444;font-weight:normal;">Lfd. Nr.</div>
<div class="a t" style="left:832.4px;top:448.38px;font-size:7.2px;line-height:8.64px;color:#444;font-weight:normal;">Datum</div>
<div class="a t" style="left:879px;top:448.38px;font-size:7.2px;line-height:8.64px;color:#444;font-weight:normal;">Betrag</div>
<div class="a t" style="left:912px;top:448.38px;font-size:7.2px;line-height:8.64px;color:#444;font-weight:normal;">Partner</div>
<div class="a t" style="left:800.8px;width:600px;text-align:center;top:463.88px;font-size:6.2px;line-height:7.44px;color:#222;font-weight:bold;">1</div>
<div class="a" style="left:642.5px;top:499.7px;width:475.79999999999995px;height:63.099999999999966px;background:#f2f3f7;border-radius:6px"></div>
<div class="a t" style="left:658.8px;top:513.30px;font-size:9.5px;line-height:11.40px;color:#444;font-weight:bold;">Kontakte</div>
<div class="a t" style="left:661.3px;top:529.48px;font-size:7.2px;line-height:8.64px;color:#444;font-weight:normal;">Datum</div>
<div class="a t" style="left:819px;top:529.48px;font-size:7.2px;line-height:8.64px;color:#444;font-weight:normal;">Bezeichnung</div>
<div class="a t" style="left:800.8px;width:600px;text-align:center;top:541.88px;font-size:6.2px;line-height:7.44px;color:#222;font-weight:bold;">1</div>
<svg class="a" style="left:1155.5px;top:46.5px" width="8" height="7" viewBox="0 0 8 7"><path d="M0 3.5 H5" stroke="#3aa64a" stroke-width="1.6"/><path d="M4 0.3 L8 3.5 L4 6.7Z" fill="#3aa64a"/></svg>
<svg class="a" style="left:1257.5px;top:46px" width="9" height="9" viewBox="0 0 9 9"><circle cx="5.5" cy="1.8" r="1.7" fill="#8a84e0"/><circle cx="2" cy="5" r="1.9" fill="none" stroke="#3a86d8" stroke-width="1.1"/><circle cx="6.8" cy="6.8" r="2" fill="#3aa64a"/></svg>
<div class="a" style="left:1162.6px;top:57.3px;width:104.5px;height:68.5px;background:#fafafa;border:2.2px solid #e600e6;border-radius:3px"></div>
<svg class="a" style="left:1167.5px;top:62px" width="8" height="8" viewBox="0 0 8 8"><circle cx="4" cy="2.6" r="2.2" fill="#f0a050"/><path d="M0.5 8 Q0.5 5 4 5 Q7.5 5 7.5 8Z" fill="#3a9ae0"/></svg>
<svg class="a" style="left:1167.5px;top:71.5px" width="8" height="7.5" viewBox="0 0 8 8"><circle cx="1.5" cy="4" r="1.4" fill="#2a7ad0"/><circle cx="6.5" cy="1.3" r="1.3" fill="#2a7ad0"/><circle cx="6.5" cy="6.7" r="1.3" fill="#2a7ad0"/><path d="M1.5 4 L6.5 1.3 M1.5 4 L6.5 6.7" stroke="#2a7ad0" stroke-width="1"/></svg>
<svg class="a" style="left:1168px;top:80px" width="8.5" height="7.5" viewBox="0 0 8 7"><rect x="0" y="0" width="5.5" height="7" fill="#5aa9f0"/><circle cx="5.5" cy="5" r="2" fill="#f0a040"/></svg>
<div class="a t" style="left:912.8px;width:600px;text-align:center;top:71.16px;font-size:6.9px;line-height:8.28px;color:#666;font-weight:normal;">SID: 7053957 (4)</div>
<svg class="a" style="left:1252.8px;top:71.3px" width="7.6" height="7.6" viewBox="0 0 8 8"><circle cx="4" cy="4" r="3.9" fill="#9dcff6"/><path d="M4 2.3 V5.7 M2.3 4 H5.7" stroke="#5a9de0" stroke-width="0.7"/></svg>
<div class="a t" style="left:914.5px;width:600px;text-align:center;top:89.25px;font-size:6.75px;line-height:8.10px;color:#666;font-weight:normal;">27-11-2024 15:47:09</div>
<div class="a t" style="left:914.5px;width:600px;text-align:center;top:97.45px;font-size:6.75px;line-height:8.10px;color:#666;font-weight:normal;">Harald Falkner</div>
<div class="a t" style="left:914.5px;width:600px;text-align:center;top:105.77px;font-size:6.72px;line-height:8.06px;color:#666;font-weight:normal;">VK-Kontrakt Inland - Freigabe</div>
<div class="a t" style="left:914.5px;width:600px;text-align:center;top:113.55px;font-size:6.75px;line-height:8.10px;color:#666;font-weight:normal;">erforderlich</div>
<div class="a" style="left:1065.8px;top:621.2px;width:202.2px;height:33px;background:#f1f2f6"></div>
<div class="a" style="left:1071px;top:635.3px;width:6px;height:6px;border:0.8px solid #8a8a8a;border-radius:50%;background:#fff"></div>
<div class="a t" style="left:1079px;top:625.56px;font-size:7.4px;line-height:8.88px;color:#555;font-weight:normal;">Freigeben und</div>
<div class="a t" style="left:1079px;top:633.76px;font-size:7.4px;line-height:8.88px;color:#555;font-weight:normal;">Disponieren [Ohne</div>
<div class="a t" style="left:1079px;top:641.96px;font-size:7.4px;line-height:8.88px;color:#555;font-weight:normal;">Prüfung]</div>
<svg class="a" style="left:1242px;top:631px" width="15" height="14.5" viewBox="0 0 15 14.5"><rect x="1.5" y="0.5" width="9.5" height="11" fill="#a9abb0"/><rect x="1.5" y="0.5" width="9.5" height="1.6" fill="#8f9196"/><path d="M3 4.5 H6 M7.5 4 H9 M3 6.5 H8" stroke="#7a7c82" stroke-width="1.1"/><path d="M11.5 12 V4 M9.8 5.5 L12.3 2.8 L14.6 5.5" stroke="#85878c" stroke-width="1.6" fill="none"/><path d="M0.5 10 H4.5 Q6.5 12.8 8.5 10 H13 V14 H0.5Z" fill="#d3d4d8"/></svg>
<div class="a" style="left:1129.6px;top:654.2px;width:140.4px;height:30.8px;background:#eef0f3"></div>
<div class="a" style="left:172.5px;top:673.8px;width:957.1px;height:11.2px;background:#f0f1f5"></div>
<div class="a" style="left:187.6px;top:657.2px;width:66.30000000000001px;height:22.0px;background:linear-gradient(#fbfbfc,#e6e8ec);border:1px solid #c5c8cf;border-radius:2.5px"></div>
<div class="a t" style="left:-79.25px;width:600px;text-align:center;top:664.12px;font-size:8.8px;line-height:10.56px;color:#363c4a;font-weight:normal;-webkit-text-stroke:0.15px #363c4a">Duplizieren</div>
<div class="a" style="left:937px;top:657.1px;width:80.5px;height:22.100000000000023px;background:linear-gradient(#0a6fe0,#0559c4);border:1px solid #0550b0;border-radius:2.5px"></div>
<div class="a t" style="left:677.25px;width:600px;text-align:center;top:664.07px;font-size:8.8px;line-height:10.56px;color:#ffffff;font-weight:normal;-webkit-text-stroke:0.15px #fff">Speichern [F2]</div>
<div class="a" style="left:1023px;top:657px;width:55.40000000000009px;height:22px;background:linear-gradient(#fbfbfc,#e6e8ec);border:1px solid #c5c8cf;border-radius:2.5px"></div>
<div class="a t" style="left:750.7px;width:600px;text-align:center;top:663.92px;font-size:8.8px;line-height:10.56px;color:#363c4a;font-weight:normal;-webkit-text-stroke:0.15px #363c4a">Neu</div>
<div class="a" style="left:1083.6px;top:657px;width:55.80000000000018px;height:22px;background:linear-gradient(#fbfbfc,#e6e8ec);border:1px solid #c5c8cf;border-radius:2.5px"></div>
<div class="a t" style="left:811.5px;width:600px;text-align:center;top:663.92px;font-size:8.8px;line-height:10.56px;color:#363c4a;font-weight:normal;-webkit-text-stroke:0.15px #363c4a">Suchen</div>
<div class="a" style="left:1144.7px;top:657px;width:55.799999999999955px;height:22px;background:linear-gradient(#fbfbfc,#e6e8ec);border:1px solid #c5c8cf;border-radius:2.5px"></div>
<div class="a t" style="left:872.5999999999999px;width:600px;text-align:center;top:663.92px;font-size:8.8px;line-height:10.56px;color:#363c4a;font-weight:normal;-webkit-text-stroke:0.15px #363c4a">Löschen</div>
<div class="a" style="left:1205.2px;top:657px;width:55.799999999999955px;height:22px;background:linear-gradient(#fbfbfc,#e6e8ec);border:1px solid #c5c8cf;border-radius:2.5px"></div>
<div class="a t" style="left:933.0999999999999px;width:600px;text-align:center;top:663.92px;font-size:8.8px;line-height:10.56px;color:#363c4a;font-weight:normal;-webkit-text-stroke:0.15px #363c4a">Zurück</div></body></html>
